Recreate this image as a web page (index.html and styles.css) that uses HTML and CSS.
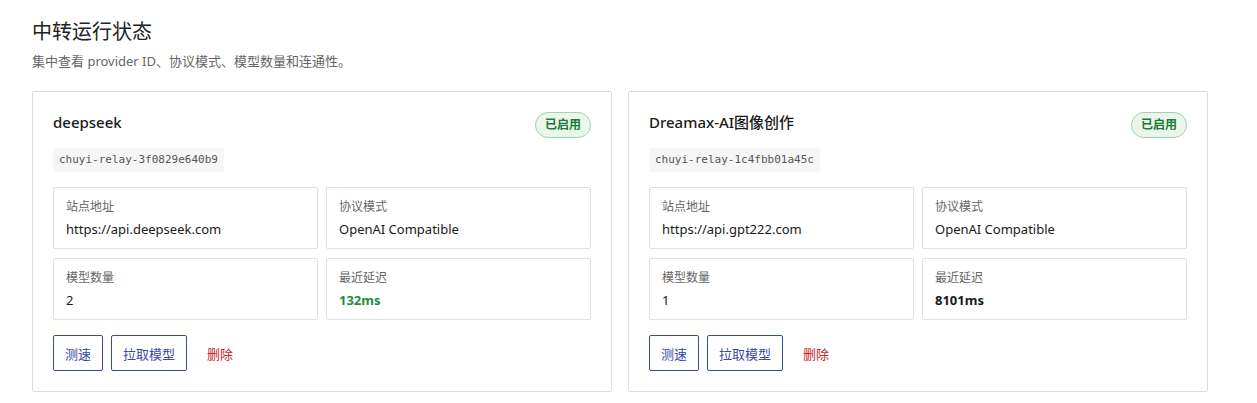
FILE: index.html
```html
<!DOCTYPE html>
<html lang="zh-CN">
<head>
    <meta charset="UTF-8">
    <meta name="viewport" content="width=device-width, initial-scale=1.0">
    <title>中转运行状态</title>
    <link rel="stylesheet" href="styles.css">
</head>
<body>
    <div class="page">
        <h1 class="heading">中转运行状态</h1>
        <p class="subtitle">集中查看 provider ID、协议模式、模型数量和连通性。</p>

        <div class="relay-list">
            <div class="relay-card">
                <div class="relay-head">
                    <h2 class="relay-name">deepseek</h2>
                    <span class="badge">已启用</span>
                </div>
                <code class="relay-id">chuyi-relay-3f0829e640b9</code>
                <div class="info-grid">
                    <div class="info-box">
                        <div class="info-label">站点地址</div>
                        <div class="info-value">https://api.deepseek.com</div>
                    </div>
                    <div class="info-box">
                        <div class="info-label">协议模式</div>
                        <div class="info-value">OpenAI Compatible</div>
                    </div>
                    <div class="info-box">
                        <div class="info-label">模型数量</div>
                        <div class="info-value">2</div>
                    </div>
                    <div class="info-box">
                        <div class="info-label">最近延迟</div>
                        <div class="info-value latency good">132ms</div>
                    </div>
                </div>
                <div class="actions">
                    <button class="button">测速</button>
                    <button class="button">拉取模型</button>
                    <button class="button-danger">删除</button>
                </div>
            </div>

            <div class="relay-card">
                <div class="relay-head">
                    <h2 class="relay-name">Dreamax-AI图像创作</h2>
                    <span class="badge">已启用</span>
                </div>
                <code class="relay-id">chuyi-relay-1c4fbb01a45c</code>
                <div class="info-grid">
                    <div class="info-box">
                        <div class="info-label">站点地址</div>
                        <div class="info-value">https://api.gpt222.com</div>
                    </div>
                    <div class="info-box">
                        <div class="info-label">协议模式</div>
                        <div class="info-value">OpenAI Compatible</div>
                    </div>
                    <div class="info-box">
                        <div class="info-label">模型数量</div>
                        <div class="info-value">1</div>
                    </div>
                    <div class="info-box">
                        <div class="info-label">最近延迟</div>
                        <div class="info-value latency">8101ms</div>
                    </div>
                </div>
                <div class="actions">
                    <button class="button">测速</button>
                    <button class="button">拉取模型</button>
                    <button class="button-danger">删除</button>
                </div>
            </div>
        </div>
    </div>
</body>
</html>
```

FILE: styles.css
```css
body {
    font-family: "Noto Sans", "Noto Sans CJK SC", sans-serif;
    margin: 0;
    padding: 18px 32px;
    background-color: #fff;
    color: #222;
}
.page {
    width: 1176px;
}
.heading {
    margin: 0 0 6px;
    font-size: 20px;
    line-height: 28px;
    font-weight: normal;
    color: #222;
}
.subtitle {
    margin: 0 0 21px;
    font-size: 13px;
    line-height: 18px;
    color: #666;
}
.relay-list {
    display: grid;
    grid-template-columns: 1fr 1fr;
    gap: 16px;
}
.relay-card {
    border: 1px solid #dcdcdc;
    border-radius: 2px;
    padding: 20px;
    display: flex;
    flex-direction: column;
    align-items: flex-start;
}
.relay-head {
    width: 100%;
    display: flex;
    justify-content: space-between;
    align-items: flex-start;
    margin-bottom: 10px;
}
.relay-name {
    margin: 0;
    font-size: 15px;
    line-height: 20px;
    font-weight: 500;
    color: #1a1a1a;
}
.badge {
    height: 24px;
    line-height: 24px;
    padding: 0 9px;
    border: 1px solid #9fd3a9;
    border-radius: 999px;
    background-color: #eaf6ec;
    color: #1b7a35;
    font-size: 12px;
    font-weight: bold;
}
.relay-id {
    font-family: "DejaVu Sans Mono", monospace;
    font-size: 11px;
    line-height: 16px;
    padding: 4px 6px;
    background-color: #f6f6f6;
    border-radius: 3px;
    color: #555;
    margin-bottom: 15px;
}
.info-grid {
    width: 100%;
    display: grid;
    grid-template-columns: 1fr 1fr;
    gap: 9px 8px;
}
.info-box {
    border: 1px solid #e0e0e0;
    border-radius: 2px;
    padding: 10px 12px;
    display: flex;
    flex-direction: column;
    gap: 4px;
}
.info-label {
    font-size: 12px;
    line-height: 18px;
    color: #666;
}
.info-value {
    font-size: 13px;
    line-height: 18px;
    color: #1a1a1a;
}
.latency {
    font-weight: bold;
}
.latency.good {
    color: #1e8e3e;
}
.actions {
    display: flex;
    gap: 8px;
    margin-top: 15px;
}
.button {
    font-family: inherit;
    height: 36px;
    padding: 0 11px;
    font-size: 13px;
    background-color: #fff;
    color: #3949ab;
    border: 1px solid #3949ab;
    border-radius: 2px;
    cursor: pointer;
}
.button-danger {
    font-family: inherit;
    height: 36px;
    padding: 0 12px;
    font-size: 13px;
    background: none;
    border: none;
    color: #c62828;
    cursor: pointer;
}
```
